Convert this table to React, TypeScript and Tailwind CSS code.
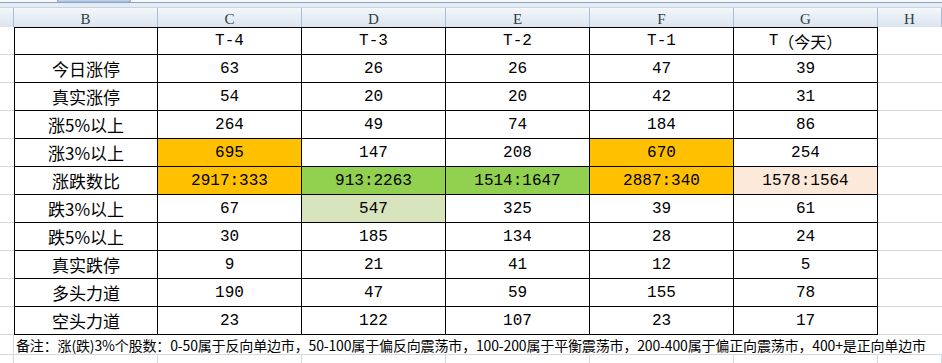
import React from 'react';

type Cell = { v: string; bg?: string };

const COLS = ['B', 'C', 'D', 'E', 'F', 'G', 'H'];

const ROWS: { label: string; cells: Cell[] }[] = [
  { label: '今日涨停', cells: [{ v: '63' }, { v: '26' }, { v: '26' }, { v: '47' }, { v: '39' }] },
  { label: '真实涨停', cells: [{ v: '54' }, { v: '20' }, { v: '20' }, { v: '42' }, { v: '31' }] },
  { label: '涨5%以上', cells: [{ v: '264' }, { v: '49' }, { v: '74' }, { v: '184' }, { v: '86' }] },
  {
    label: '涨3%以上',
    cells: [{ v: '695', bg: 'bg-[#ffc000]' }, { v: '147' }, { v: '208' }, { v: '670', bg: 'bg-[#ffc000]' }, { v: '254' }],
  },
  {
    label: '涨跌数比',
    cells: [
      { v: '2917:333', bg: 'bg-[#ffc000]' },
      { v: '913:2263', bg: 'bg-[#92d050]' },
      { v: '1514:1647', bg: 'bg-[#92d050]' },
      { v: '2887:340', bg: 'bg-[#ffc000]' },
      { v: '1578:1564', bg: 'bg-[#fde9d9]' },
    ],
  },
  { label: '跌3%以上', cells: [{ v: '67' }, { v: '547', bg: 'bg-[#d8e4bc]' }, { v: '325' }, { v: '39' }, { v: '61' }] },
  { label: '跌5%以上', cells: [{ v: '30' }, { v: '185' }, { v: '134' }, { v: '28' }, { v: '24' }] },
  { label: '真实跌停', cells: [{ v: '9' }, { v: '21' }, { v: '41' }, { v: '12' }, { v: '5' }] },
  { label: '多头力道', cells: [{ v: '190' }, { v: '47' }, { v: '59' }, { v: '155' }, { v: '78' }] },
  { label: '空头力道', cells: [{ v: '23' }, { v: '122' }, { v: '107' }, { v: '23' }, { v: '17' }] },
];

const mono = "font-['Liberation_Mono','Noto_Sans_CJK_SC',monospace]";
const cjk = "font-['Noto_Sans_CJK_SC',sans-serif]";
const grid = 'grid grid-cols-[14px_repeat(6,144px)_1fr]';

function RowStub() {
  return <div className="border-b border-[#d4d9e0] bg-white" />;
}

function Tail() {
  return <div className="border-b border-[#d4d9e0] bg-white" />;
}

export default function App() {
  return (
    <div className="w-[942px] h-[363px] overflow-hidden bg-white text-black">
      {/* ribbon edge + sheet tab */}
      <div className="relative h-[7px] bg-[#e6ecf4]">
        <div className="h-[3px] bg-[#f5f7fa] border-b border-[#8ea3bf]" />
        <div className="absolute left-[57px] top-0 w-[74px] h-[3px] rounded-b-[3px] bg-gradient-to-b from-[#c3d6ee] to-[#9fbbe0] border-x border-b border-[#8ea3bf]" />
      </div>

      {/* column header */}
      <div className={`${grid} h-[20px] bg-gradient-to-b from-[#f4f7fb] to-[#dbe4ef] border-t border-[#c5d3e3]`}>
        <div className="border-r border-[#a7bdd6]" />
        {COLS.map((c) => (
          <div
            key={c}
            className={`flex items-center justify-center border-r border-[#a7bdd6] text-[15px] text-[#2c4240] font-['Liberation_Serif',serif]`}
          >
            {c}
          </div>
        ))}
      </div>

      {/* title row */}
      <div className={`${grid} h-[28px]`}>
        <RowStub />
        <div className="border border-black" />
        {['T-4', 'T-3', 'T-2', 'T-1'].map((t) => (
          <div key={t} className={`flex items-center justify-center border-y border-r border-black text-[16px] ${mono}`}>
            {t}
          </div>
        ))}
        <div className={`flex items-center justify-center border-y border-r border-black text-[16px] ${mono}`}>
          T<span className={`${cjk} text-[16px]`}>（今天）</span>
        </div>
        <Tail />
      </div>

      {ROWS.map((r) => (
        <div key={r.label} className={`${grid} h-[28px]`}>
          <RowStub />
          <div className={`flex items-center justify-center border-x border-b border-black text-[17px] ${cjk}`}>
            {r.label}
          </div>
          {r.cells.map((c, i) => (
            <div
              key={i}
              className={`flex items-center justify-center border-r border-b border-black text-[16px] ${mono} ${c.bg ?? 'bg-white'}`}
            >
              {c.v}
            </div>
          ))}
          <Tail />
        </div>
      ))}

      {/* remark row */}
      <div className="relative h-[20px] border-b border-[#d4d9e0]">
        <div className="w-[14px] h-full border-r border-[#d4d9e0]" />
        <div className={`absolute left-[16px] top-0 h-full flex items-center whitespace-nowrap text-[14px] leading-none tracking-[-0.15px] ${cjk}`}>
          备注：涨(跌)3%个股数：0-50属于反向单边市，50-100属于偏反向震荡市，100-200属于平衡震荡市，200-400属于偏正向震荡市，400+是正向单边市
        </div>
      </div>

      {/* empty row */}
      <div className={`${grid} h-[20px]`}>
        <div className="border-r border-[#d4d9e0]" />
        {COLS.map((c) => (
          <div key={c} className="border-r border-[#d4d9e0]" />
        ))}
      </div>
    </div>
  );
}
